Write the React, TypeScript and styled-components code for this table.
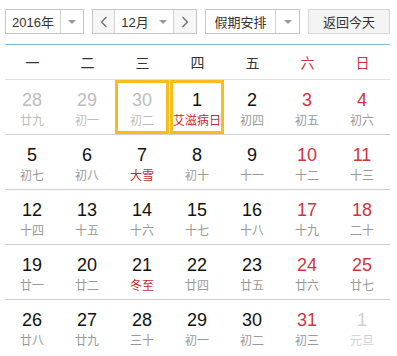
import React from "react";
import styled, { createGlobalStyle } from "styled-components";

const Global = createGlobalStyle`
  html, body { margin: 0; padding: 0; background: #fff; }
  body { font-family: "Liberation Sans", "Noto Sans CJK SC", sans-serif; }
  * { box-sizing: border-box; }
`;

const Page = styled.div`
  width: 397px;
  padding: 9px 7px 0 5px;
`;

const Toolbar = styled.div`
  display: flex;
  justify-content: space-between;
  height: 25px;
`;

const Group = styled.div<{ $w: number; $bg?: string }>`
  display: flex;
  width: ${(p) => p.$w}px;
  height: 25px;
  border: 1px solid #c6c6c6;
  background: ${(p) => p.$bg || "#fff"};
`;

const Label = styled.div<{ $flex?: boolean }>`
  flex: 1;
  display: flex;
  align-items: center;
  justify-content: center;
  font-family: "Liberation Sans", "Noto Sans CJK SC", sans-serif;
  font-size: 13px;
  color: #333;
  gap: 10px;
`;

const Drop = styled.div<{ $w: number }>`
  width: ${(p) => p.$w}px;
  border-left: 1px solid #d4d4d4;
  display: flex;
  align-items: center;
  justify-content: center;
  background: #fff;
`;

const Tri = styled.span`
  width: 0;
  height: 0;
  border-left: 4px solid transparent;
  border-right: 4px solid transparent;
  border-top: 4px solid #999;
`;

const NavBtn = styled.div<{ $w: number; $side: "l" | "r" }>`
  width: ${(p) => p.$w}px;
  background: #f6f6f6;
  display: flex;
  align-items: center;
  justify-content: center;
  ${(p) => (p.$side === "l" ? "border-right: 1px solid #d4d4d4;" : "border-left: 1px solid #d4d4d4;")}
`;

const TodayBtn = styled.div`
  width: 82px;
  height: 25px;
  border: 1px solid #d6d6d6;
  background: #f4f4f4;
  display: flex;
  align-items: center;
  justify-content: center;
  font-family: "Noto Sans CJK SC", sans-serif;
  font-size: 13px;
  color: #333;
`;

const BlueLine = styled.div`
  margin-top: 10px;
  height: 1px;
  background: #7fb6df;
`;

const HeadRow = styled.div`
  display: grid;
  grid-template-columns: repeat(7, 55px);
  height: 35px;
  border-bottom: 1px solid #e0e0e0;
`;

const HeadCell = styled.div<{ $red?: boolean }>`
  display: flex;
  align-items: center;
  justify-content: center;
  font-family: "Noto Sans CJK SC", sans-serif;
  font-size: 14px;
  color: ${(p) => (p.$red ? "#d0343c" : "#333")};
`;

const Row = styled.div<{ $last?: boolean }>`
  display: grid;
  grid-template-columns: repeat(7, 55px);
  height: 55px;
  border-bottom: ${(p) => (p.$last ? "none" : "1px solid #cfcfcf")};
`;

const Cell = styled.div`
  padding-right: 1px;
  height: 54px;
`;

const Box = styled.div<{ $sel?: boolean }>`
  height: 100%;
  display: flex;
  flex-direction: column;
  align-items: center;
  padding-top: ${(p) => (p.$sel ? "8px" : "11px")};
  border: ${(p) => (p.$sel ? "3px solid #f8bc1c" : "none")};
`;

const Num = styled.div<{ $c: string }>`
  font-family: "Liberation Sans", Arial, sans-serif;
  font-size: 18px;
  line-height: 18px;
  height: 18px;
  color: ${(p) => p.$c};
`;

const Lunar = styled.div<{ $c: string }>`
  margin-top: 3px;
  font-family: "Noto Sans CJK SC", sans-serif;
  font-size: 12px;
  line-height: 16px;
  color: ${(p) => p.$c};
  white-space: nowrap;
`;

type Day = { n: number; l: string; k?: "prev" | "next"; hol?: boolean; sel?: boolean };

const weeks: Day[][] = [
  [
    { n: 28, l: "廿九", k: "prev" },
    { n: 29, l: "初一", k: "prev" },
    { n: 30, l: "初二", k: "prev", sel: true },
    { n: 1, l: "艾滋病日", hol: true, sel: true },
    { n: 2, l: "初四" },
    { n: 3, l: "初五" },
    { n: 4, l: "初六" },
  ],
  [
    { n: 5, l: "初七" },
    { n: 6, l: "初八" },
    { n: 7, l: "大雪", hol: true },
    { n: 8, l: "初十" },
    { n: 9, l: "十一" },
    { n: 10, l: "十二" },
    { n: 11, l: "十三" },
  ],
  [
    { n: 12, l: "十四" },
    { n: 13, l: "十五" },
    { n: 14, l: "十六" },
    { n: 15, l: "十七" },
    { n: 16, l: "十八" },
    { n: 17, l: "十九" },
    { n: 18, l: "二十" },
  ],
  [
    { n: 19, l: "廿一" },
    { n: 20, l: "廿二" },
    { n: 21, l: "冬至", hol: true },
    { n: 22, l: "廿四" },
    { n: 23, l: "廿五" },
    { n: 24, l: "廿六" },
    { n: 25, l: "廿七" },
  ],
  [
    { n: 26, l: "廿八" },
    { n: 27, l: "廿九" },
    { n: 28, l: "三十" },
    { n: 29, l: "初一" },
    { n: 30, l: "初二" },
    { n: 31, l: "初三" },
    { n: 1, l: "元旦", k: "next" },
  ],
];

const Chevron = ({ dir }: { dir: "l" | "r" }) => (
  <svg width="8" height="12" viewBox="0 0 8 12">
    <polyline
      points={dir === "l" ? "6.5,1 1.5,6 6.5,11" : "1.5,1 6.5,6 1.5,11"}
      fill="none"
      stroke="#666"
      strokeWidth="1.2"
    />
  </svg>
);

const heads = ["一", "二", "三", "四", "五", "六", "日"];

export default function App() {
  return (
    <Page>
      <Global />
      <Toolbar>
        <Group $w={79}>
          <Label>2016年</Label>
          <Drop $w={23}>
            <Tri />
          </Drop>
        </Group>
        <Group $w={105}>
          <NavBtn $w={22} $side="l">
            <Chevron dir="l" />
          </NavBtn>
          <Label>
            <span>12月</span>
            <Tri />
          </Label>
          <NavBtn $w={23} $side="r">
            <Chevron dir="r" />
          </NavBtn>
        </Group>
        <Group $w={95}>
          <Label>假期安排</Label>
          <Drop $w={24}>
            <Tri />
          </Drop>
        </Group>
        <TodayBtn>返回今天</TodayBtn>
      </Toolbar>
      <BlueLine />
      <HeadRow>
        {heads.map((h, i) => (
          <HeadCell key={h} $red={i >= 5}>
            {h}
          </HeadCell>
        ))}
      </HeadRow>
      {weeks.map((w, wi) => (
        <Row key={wi} $last={wi === weeks.length - 1}>
          {w.map((d, di) => {
            const weekend = di >= 5;
            const numColor = d.k === "prev" ? "#bdbdbd" : d.k === "next" ? "#cfcfcf" : weekend ? "#d0343c" : "#111";
            const lunarColor = d.k === "prev" ? "#bdbdbd" : d.k === "next" ? "#cfcfcf" : d.hol ? "#c8282e" : "#999";
            return (
              <Cell key={di}>
                <Box $sel={d.sel}>
                  <Num $c={numColor}>{d.n}</Num>
                  <Lunar $c={lunarColor}>{d.l}</Lunar>
                </Box>
              </Cell>
            );
          })}
        </Row>
      ))}
    </Page>
  );
}
